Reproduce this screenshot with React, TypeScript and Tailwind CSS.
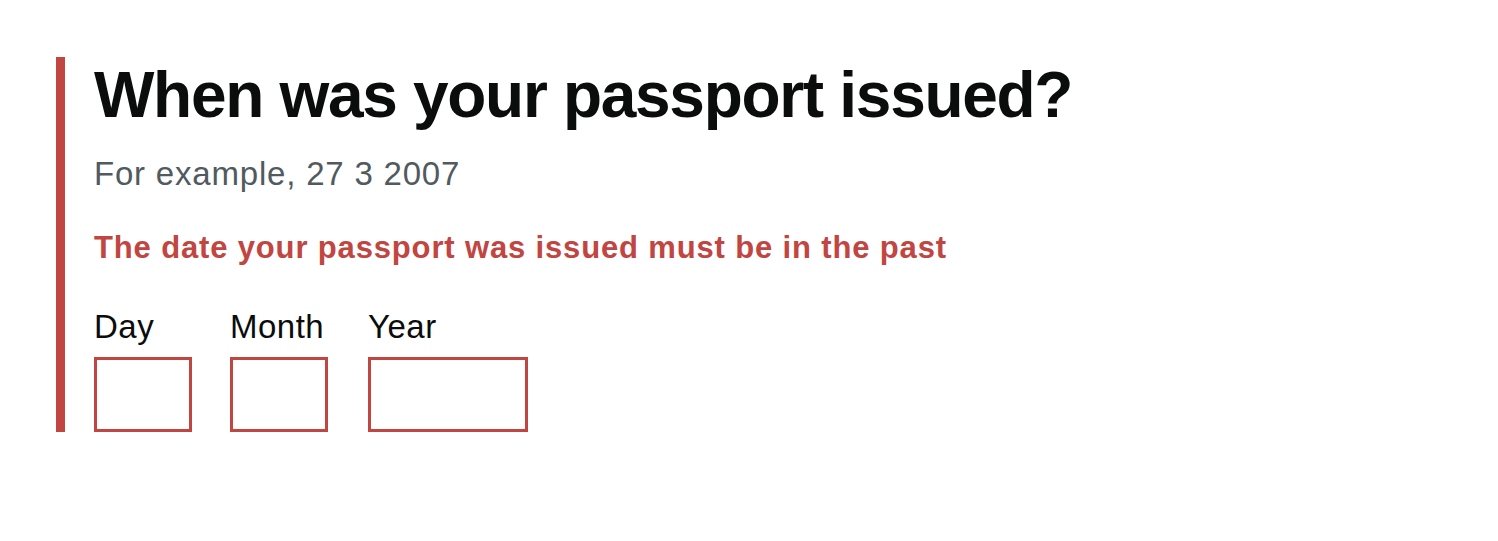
import React from "react";

export default function App() {
  const box = "h-[75px] border-[3px] border-[#c14541] mt-[10px] outline-none bg-white";
  const label = "text-[33px] leading-[40px] text-[#0b0c0c] tracking-[0.5px]";
  return (
    <div className="w-[1498px] h-[541px] bg-white" style={{ fontFamily: '"Liberation Sans", Arial, sans-serif' }}>
      <div className="pt-[57px] pl-[56px]">
        <div className="flex">
          <div className="w-[9px] bg-[#c14541]" />
          <div className="pl-[29px]">
            <h1 className="text-[64px] leading-[64px] font-bold text-[#0b0c0c] tracking-[-1.3px] mt-[6px] whitespace-nowrap">
              When was your passport issued?
            </h1>
            <p className="text-[33px] leading-[40px] text-[#505a5f] tracking-[0.8px] mt-[27px]">For example, 27 3 2007</p>
            <p className="text-[31px] leading-[40px] font-bold text-[#c14541] tracking-[0.85px] mt-[34px] whitespace-nowrap">
              The date your passport was issued must be in the past
            </p>
            <div className="flex mt-[39px]">
              <div className="flex flex-col">
                <label className={label}>Day</label>
                <input className={`w-[98px] ${box}`} />
              </div>
              <div className="flex flex-col ml-[38px]">
                <label className={label}>Month</label>
                <input className={`w-[98px] ${box}`} />
              </div>
              <div className="flex flex-col ml-[40px]">
                <label className={label}>Year</label>
                <input className={`w-[160px] ${box}`} />
              </div>
            </div>
          </div>
        </div>
      </div>
    </div>
  );
}
